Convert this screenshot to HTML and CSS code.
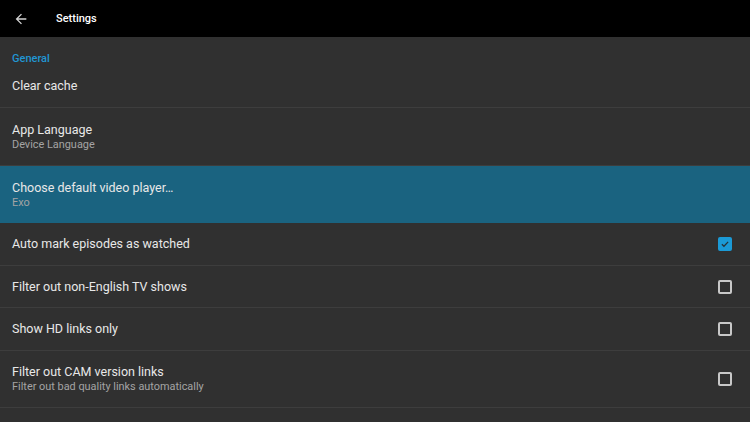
FILE: index.html
```html
<!DOCTYPE html>
<html lang="en">
<head>
    <meta charset="UTF-8">
    <title>Settings</title>
    <link rel="stylesheet" href="styles.css">
</head>
<body>
    <div class="toolbar">
        <svg class="back" width="16" height="16" viewBox="0 0 24 24">
            <path d="M20 11H7.83l5.59-5.59L12 4l-8 8 8 8 1.41-1.41L7.83 13H20v-2z" fill="#d4d4d4"/>
        </svg>
        <span class="title">Settings</span>
    </div>

    <div class="list">
        <div class="category">General</div>

        <div class="row">
            <div class="text"><div class="label">Clear cache</div></div>
        </div>

        <div class="row two">
            <div class="text">
                <div class="label">App Language</div>
                <div class="sub">Device Language</div>
            </div>
        </div>

        <div class="row two selected">
            <div class="text">
                <div class="label">Choose default video player…</div>
                <div class="sub">Exo</div>
            </div>
        </div>

        <div class="row">
            <div class="text"><div class="label">Auto mark episodes as watched</div></div>
            <span class="check on">
                <svg width="12" height="12" viewBox="0 0 24 24"><path d="M4.5 12.5l5 5L19.5 7" fill="none" stroke="#263238" stroke-width="3"/></svg>
            </span>
        </div>

        <div class="row short">
            <div class="text"><div class="label">Filter out non-English TV shows</div></div>
            <span class="check"></span>
        </div>

        <div class="row">
            <div class="text"><div class="label">Show HD links only</div></div>
            <span class="check"></span>
        </div>

        <div class="row two last">
            <div class="text">
                <div class="label">Filter out CAM version links</div>
                <div class="sub">Filter out bad quality links automatically</div>
            </div>
            <span class="check"></span>
        </div>
    </div>
</body>
</html>
```

FILE: styles.css
```css
body {
    margin: 0;
    background: #303030;
    font-family: Roboto, "Liberation Sans", sans-serif;
    color: #e8e8e8;
    overflow: hidden;
}
.toolbar {
    height: 37px;
    background: #000;
    display: flex;
    align-items: center;
}
.back {
    margin-left: 13px;
}
.title {
    margin-left: 27px;
    font-size: 11px;
    font-weight: 500;
    color: #fff;
}
.category {
    height: 28px;
    box-sizing: border-box;
    padding: 15px 0 0 12px;
    font-size: 11px;
    font-weight: 500;
    color: #2196d3;
}
.row {
    height: 42px;
    border-bottom: 1px solid #3d3d3d;
    display: flex;
    align-items: center;
    padding: 0 18px 0 12px;
}
.row.short {
    height: 41px;
}
.row.two {
    height: 57px;
}
.row.last {
    height: 56px;
}
.row.selected {
    background: #1a6380;
    border-bottom: none;
}
.text {
    flex: 1;
}
.label {
    font-size: 12.5px;
    line-height: 16px;
}
.sub {
    font-size: 10.9px;
    line-height: 14px;
    color: #a4a4a4;
}
.check {
    width: 10px;
    height: 10px;
    border: 2px solid #c8c8c8;
    border-radius: 2px;
    display: flex;
    align-items: center;
    justify-content: center;
}
.check.on {
    background: #1b9ad6;
    border-color: #1b9ad6;
}
```
